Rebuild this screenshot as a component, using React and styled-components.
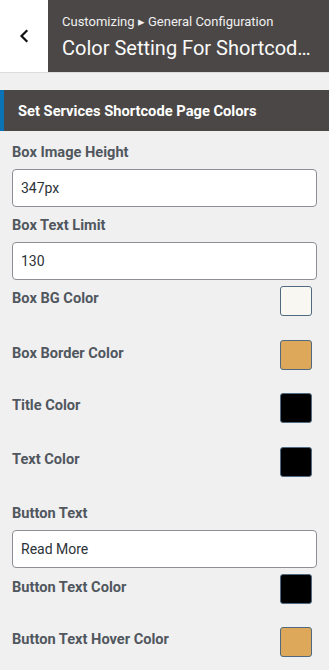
import styled, { createGlobalStyle } from 'styled-components';

const GlobalStyle = createGlobalStyle`
  html, body {
    margin: 0;
    padding: 0;
    background: #f0f0f1;
    font-family: Roboto, "Liberation Sans", Arial, sans-serif;
  }
`

const Panel = styled.div`
  width: 329px;
  min-height: 670px;
  background: #f0f0f1;
`

const Header = styled.div`
  display: flex;
  height: 72px;
  border-bottom: 1px solid #dcdcde;
`

const BackButton = styled.button`
  width: 48px;
  flex-shrink: 0;
  border: 0;
  padding: 0;
  background: #fff;
  display: flex;
  align-items: center;
  justify-content: center;
  cursor: pointer;
`

const HeaderTitle = styled.div`
  flex: 1;
  min-width: 0;
  background: #4b4746;
  padding: 13px 17px 0 14px;
  color: #fff;
`

const Breadcrumb = styled.div`
  font-size: 13px;
  line-height: 18px;
  color: #f0f0f0;
`

const Title = styled.div`
  font-size: 20px;
  line-height: 28px;
  margin-top: 3px;
  white-space: nowrap;
  overflow: hidden;
  text-overflow: ellipsis;
  color: #fafafa;
`

const SectionBar = styled.div`
  margin-top: 17px;
  height: 41px;
  background: #4b4746;
  border-left: 4px solid #0b73b5;
  display: flex;
  align-items: center;
  padding-left: 14px;
  color: #fff;
  font-size: 14.7px;
  font-weight: 700;
`

const Controls = styled.div`
  padding: 11px 12px 0 12px;
`

const TextControl = styled.div`
  margin-bottom: ${p => p.$gap}px;
`

const Label = styled.div`
  font-size: 14.6px;
  line-height: 20px;
  font-weight: 700;
  color: #50575e;
  padding-top: ${p => p.$offset || 0}px;
`

const Input = styled.input`
  display: block;
  box-sizing: border-box;
  width: 100%;
  height: 38px;
  margin-top: 7px;
  padding: 0 8px;
  border: 1px solid #8c8f94;
  border-radius: 4px;
  background: #fff;
  font-family: inherit;
  font-size: 14px;
  color: #2c3338;
  outline: none;
`

const ColorRow = styled.div`
  display: flex;
  justify-content: space-between;
  align-items: flex-start;
  padding-right: 5px;
  margin-bottom: ${p => p.$gap}px;
`

const Swatch = styled.button`
  width: 32px;
  height: 30px;
  padding: 0;
  border: 1px solid #4f6a80;
  border-radius: 3px;
  background: ${p => p.$color};
  cursor: pointer;
`

function Chevron() {
  return (
    <svg width="12" height="14" viewBox="0 0 12 14">
      <path d="M8.5 2 L3.5 7 L8.5 12" fill="none" stroke="#111" strokeWidth="2.2" strokeLinecap="square" />
    </svg>
  );
}

export default function App() {
  return (
    <Panel>
      <GlobalStyle />
      <Header>
        <BackButton aria-label="Back"><Chevron /></BackButton>
        <HeaderTitle>
          <Breadcrumb>Customizing ▸ General Configuration</Breadcrumb>
          <Title>Color Setting For Shortcode Page</Title>
        </HeaderTitle>
      </Header>

      <SectionBar>Set Services Shortcode Page Colors</SectionBar>

      <Controls>
        <TextControl $gap={8}>
          <Label>Box Image Height</Label>
          <Input defaultValue="347px" />
        </TextControl>
        <TextControl $gap={6}>
          <Label>Box Text Limit</Label>
          <Input defaultValue="130" />
        </TextControl>

        <ColorRow $gap={24}>
          <Label $offset={2}>Box BG Color</Label>
          <Swatch $color="#f9f7f2" />
        </ColorRow>
        <ColorRow $gap={23}>
          <Label $offset={3}>Box Border Color</Label>
          <Swatch $color="#dea85a" />
        </ColorRow>
        <ColorRow $gap={24}>
          <Label $offset={2}>Title Color</Label>
          <Swatch $color="#000" />
        </ColorRow>
        <ColorRow $gap={26}>
          <Label $offset={2}>Text Color</Label>
          <Swatch $color="#000" />
        </ColorRow>

        <TextControl $gap={6}>
          <Label>Button Text</Label>
          <Input defaultValue="Read More" />
        </TextControl>

        <ColorRow $gap={23}>
          <Label $offset={3}>Button Text Color</Label>
          <Swatch $color="#000" />
        </ColorRow>
        <ColorRow $gap={14}>
          <Label $offset={2}>Button Text Hover Color</Label>
          <Swatch $color="#dea85a" />
        </ColorRow>
      </Controls>
    </Panel>
  );
}
